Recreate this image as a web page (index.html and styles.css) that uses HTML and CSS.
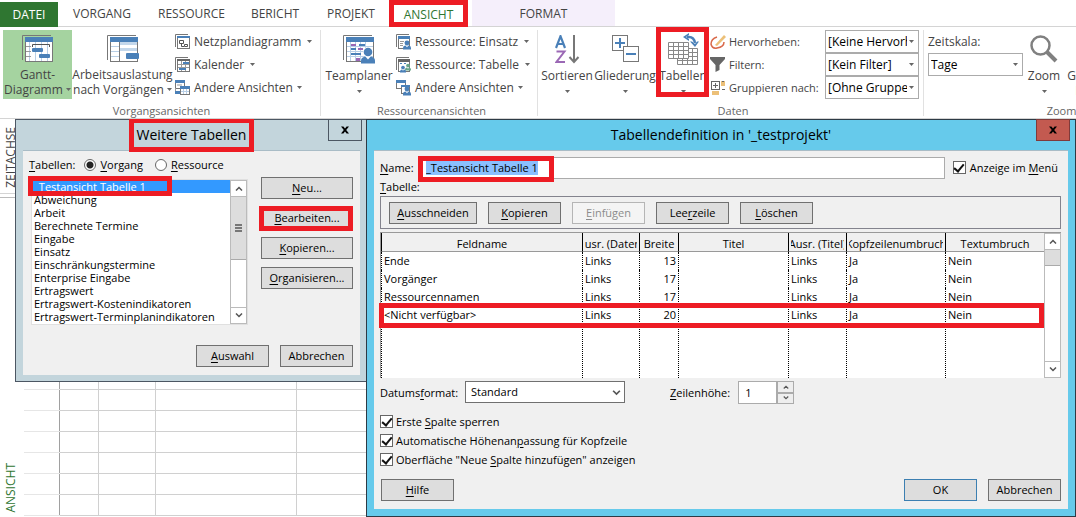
FILE: index.html
```html
<!DOCTYPE html>
<html lang="de">
<head>
<meta charset="utf-8">
<title>Tabellendefinition</title>
<link rel="stylesheet" href="styles.css">
</head>
<body>
<svg class="defs" aria-hidden="true">
  <symbol id="caret" viewBox="0 0 5 3"><path d="M0 0h5L2.500 3z" fill="#666"/></symbol>
  <symbol id="up" viewBox="0 0 8 5"><path d="M1 4.500 4 1.500 7 4.500" fill="none" stroke="#555" stroke-width="1.500"/></symbol>
  <symbol id="down" viewBox="0 0 8 5"><path d="M1 .5 4 3.500 7 .5" fill="none" stroke="#555" stroke-width="1.500"/></symbol>
  <symbol id="person" viewBox="0 0 14 16"><path d="M0 16v-3q0-3 4-4h6q4 1 4 4v3z" fill="currentColor"/><path d="M4 8.500 7 12l3-3.500z" fill="#fff"/><circle cx="7" cy="4.500" r="4.300" fill="currentColor"/></symbol>
  <symbol id="cross" viewBox="0 0 10 9"><path d="M0 0h3l2 2.500L7 0h3L6.500 4.500 10 9H7L5 6.500 3 9H0l3.500-4.500z" fill="#000"/></symbol>
</svg>

<nav class="tabs">
  <button class="tab file">DATEI</button>
  <button class="tab">VORGANG</button>
  <button class="tab">RESSOURCE</button>
  <button class="tab">BERICHT</button>
  <button class="tab">PROJEKT</button>
  <button class="tab active">ANSICHT<span class="mark mark-tab"></span></button>
  <button class="tab context">FORMAT</button>
</nav>

<header class="ribbon">
  <section class="group g-task">
    <div class="tools">
      <button class="big on">
        <svg width="31" height="27" viewBox="0 0 31 27">
          <path d="M.5 25V.5H29" fill="none" stroke="#777"/>
          <rect x="3.500" y="2.500" width="27" height="24" fill="#fff" stroke="#777"/>
          <path d="M3 2h28v5H3z" fill="#4a80b8"/>
          <path d="M7.500 7v19M13.500 7v19M19.500 7v19M25.500 7v19" stroke="#b8cfe6"/><path d="M4 11.500h5M4 16.500h5M4 21.500h5" stroke="#999"/>
          <path d="M10.500 12V9.500h17V12" fill="none" stroke="#555"/>
          <rect x="10" y="13" width="11" height="4" rx="1" fill="#4a80b8"/><rect x="17" y="19" width="11" height="4" rx="1" fill="#4a80b8"/>
        </svg>
        <span>Gantt-<br>Diagramm <svg class="caret"><use href="#caret"/></svg></span>
      </button>
      <button class="big wide">
        <svg width="32" height="27" viewBox="0 0 32 27">
          <path d="M.5 25V.5H29" fill="none" stroke="#777"/>
          <rect x="3.500" y="2.500" width="27" height="24" fill="#fff" stroke="#777"/>
          <path d="M3 2h28v5H3z" fill="#4a80b8"/>
          <path d="M13 7h17v3H13zM13 13h17v3H13z" fill="#c3d7eb"/>
          <path d="M4 11.500h8M4 16.500h8M4 21.500h8" stroke="#b8cfe6"/><path d="M12.500 7v19" stroke="#777"/>
          <rect x="19" y="18" width="13" height="6" rx="1" fill="#4a80b8"/>
        </svg>
        <span>Arbeitsauslastung<br>nach Vorgängen <svg class="caret"><use href="#caret"/></svg></span>
      </button>
      <div class="list">
        <button class="small">
          <svg width="15" height="15" viewBox="0 0 15 15"><path d="M.5 13V.5H13" fill="none" stroke="#777"/><rect x="2.500" y="2.500" width="12" height="12" fill="#fff" stroke="#777"/><path d="M2 2h13v2H2z" fill="#4a80b8"/><path d="M4.500 6.500h4v3h-4zM9.500 10.500h3v2h-3zM6.500 10v2.500H9" fill="none" stroke="#555"/></svg>
          <span>Netzplandiagramm</span><svg class="caret far"><use href="#caret"/></svg>
        </button>
        <button class="small">
          <svg width="15" height="15" viewBox="0 0 15 15"><path d="M.5 13V.5H13" fill="none" stroke="#777"/><rect x="2.500" y="2.500" width="12" height="12" fill="#fff" stroke="#777"/><path d="M2 2h13v2H2z" fill="#666"/><path d="M6.500 4v10M10.500 4v10M3 7.500h11M3 10.500h11" stroke="#999"/><path d="M8 5h6v2H8zM4 11h7v2H4z" fill="#4a80b8"/></svg>
          <span>Kalender</span><svg class="caret far"><use href="#caret"/></svg>
        </button>
        <button class="small">
          <svg width="15" height="15" viewBox="0 0 15 15"><rect x=".5" y=".5" width="9" height="8" fill="#fff" stroke="#777"/><path d="M0 0h10v3H0zM0 11h5v3H0z" fill="#4a80b8"/><path d="M.5 8v3M2 5h5" stroke="#999"/><rect x="5.500" y="6.500" width="9" height="8" fill="#fff" stroke="#777"/><path d="M5 6h10v3H5z" fill="#4a80b8"/><path d="M8.500 9v5M11.500 9v5M6 11.500h8" stroke="#b8cfe6"/></svg>
          <span>Andere Ansichten</span><svg class="caret"><use href="#caret"/></svg>
        </button>
      </div>
    </div>
    <h2>Vorgangsansichten</h2>
  </section>

  <section class="group g-res">
    <div class="tools">
      <button class="big team">
        <svg width="32" height="29" viewBox="0 0 32 29">
          <path d="M.5 25V.5H29" fill="none" stroke="#777"/>
          <rect x="3.500" y="2.500" width="27" height="24" fill="#fff" stroke="#777"/>
          <path d="M3 2h28v5H3z" fill="#4a80b8"/>
          <path d="M7.500 7v19M12.500 7v19M17.500 7v19M22.500 7v19M4 11.500h26M4 16.500h26M4 21.500h26" stroke="#b8cfe6"/>
          <path d="M8 9h5v2H8zM15 13h5v2h-5zM13 23h4v3h-4z" fill="#9b68b5"/><path d="M16 9h6v2h-6zM8 13h5v2H8zM8 18h10v2H8z" fill="#4a80b8"/>
          <circle cx="25" cy="17" r="5" fill="#fff"/>
          <svg x="18" y="12" width="14" height="17" color="#4a80b8"><use href="#person"/></svg>
        </svg>
        <span>Teamplaner</span><svg class="caret low"><use href="#caret"/></svg>
      </button>
      <div class="list">
        <button class="small">
          <svg width="15" height="16" viewBox="0 0 15 16"><path d="M.5 13V.5H13" fill="none" stroke="#777"/><rect x="2.500" y="2.500" width="11" height="12" fill="#fff" stroke="#777"/><path d="M2 2h12v3H2z" fill="#4a80b8"/><path d="M4 7.500h4M4 9.500h3M4 11.500h3" stroke="#999"/><svg x="7" y="6" width="8" height="10" color="#4a80b8"><use href="#person"/></svg></svg>
          <span>Ressource: Einsatz</span><svg class="caret far"><use href="#caret"/></svg>
        </button>
        <button class="small">
          <svg width="15" height="16" viewBox="0 0 15 16"><path d="M.5 13V.5H13" fill="none" stroke="#777"/><rect x="2.500" y="2.500" width="11" height="12" fill="#fff" stroke="#777"/><path d="M2 2h12v3H2z" fill="#666"/><path d="M4 6.500h2M8 6.500h2" stroke="#4a80b8"/><svg x="9" y="6" width="6" height="8" color="#68a58a"><use href="#person"/></svg><svg x="4" y="8" width="6" height="8" color="#4a80b8"><use href="#person"/></svg></svg>
          <span>Ressource: Tabelle</span><svg class="caret far"><use href="#caret"/></svg>
        </button>
        <button class="small">
          <svg width="15" height="16" viewBox="0 0 15 16"><rect x=".5" y=".5" width="9" height="8" fill="#fff" stroke="#777"/><path d="M0 0h10v3H0z" fill="#4a80b8"/><rect x="5.500" y="5.500" width="8" height="8" fill="#fff" stroke="#777"/><path d="M5 5h9v2H5z" fill="#4a80b8"/><svg x="7" y="6" width="8" height="10" color="#4a80b8"><use href="#person"/></svg></svg>
          <span>Andere Ansichten</span><svg class="caret"><use href="#caret"/></svg>
        </button>
      </div>
    </div>
    <h2>Ressourcenansichten</h2>
  </section>

  <section class="group g-data">
    <div class="tools">
      <button class="big sort">
        <svg width="25" height="29" viewBox="0 0 25 29"><path d="M1 13 5.500 1.200 10 13M2.500 9h6" fill="none" stroke="#4a80b8" stroke-width="2.200"/><path d="M1.500 16.500h8L1.500 27h8.500" fill="none" stroke="#9b68b5" stroke-width="2"/><path d="M19 0v27M14.500 22l4.500 5 4.500-5" fill="none" stroke="#777" stroke-width="2"/></svg>
        <span>Sortieren</span><svg class="caret low"><use href="#caret"/></svg>
      </button>
      <button class="big outline">
        <svg width="27" height="28" viewBox="0 0 27 28"><rect x=".5" y=".5" width="15" height="15" fill="#fff" stroke="#777"/><path d="M8 3v10M3 8h10" stroke="#4a80b8" stroke-width="2"/><rect x="11.500" y="11.500" width="15" height="15" fill="#fff" stroke="#777"/><path d="M14 19h10" stroke="#4a80b8" stroke-width="2"/></svg>
        <span>Gliederung</span><svg class="caret low"><use href="#caret"/></svg>
      </button>
      <button class="big tables">
        <svg width="31" height="32" viewBox="0 0 31 32"><path d="M9.500 15.500h20v16h-20zM14.500 15v16M19.500 15v16M24.500 15v16M9 19.500h20M9 23.500h20M9 27.500h20" fill="#fff" stroke="#888"/><path d="M.5 9.500h20v16H.5zM5.500 9v16M10.500 9v16M15.500 9v16M0 13.500h20M0 17.500h20M0 21.500h20" fill="#fff" stroke="#888"/><path d="M19 4h2q5 0 6 6" fill="none" stroke="#4a80b8" stroke-width="2.500"/><path d="M21 0v2l-3 2 3 2v2l-6-4zM22 8.500h2l3 2.500 2-2.500h2L27 14z" fill="#4a80b8"/></svg>
        <span>Tabellen</span><svg class="caret low"><use href="#caret"/></svg>
        <span class="mark mark-fill"></span>
      </button>
      <div class="fields">
        <svg width="16" height="16" viewBox="0 0 16 16"><path d="M7 3Q1 5 1 10q1 5 6 4 7-1 7-6" fill="none" stroke="#d9694a" stroke-width="1.500"/><path d="m5 11 9-10 2 2-9 9z" fill="#ecc078"/></svg>
        <label for="hl">Hervorheben:</label>
        <span class="combo"><select id="hl"><option>[Keine Hervorhebung]</option></select><svg class="caret"><use href="#caret"/></svg></span>
        <svg width="15" height="15" viewBox="0 0 15 15"><path d="M0 0h15v2L9.500 8v5L5.500 15V8L0 2z" fill="#666"/></svg>
        <label for="fi">Filtern:</label>
        <span class="combo"><select id="fi"><option>[Kein Filter]</option></select><svg class="caret"><use href="#caret"/></svg></span>
        <svg width="15" height="15" viewBox="0 0 15 15"><rect x="1.500" y="1.500" width="8" height="8" fill="#fff" stroke="#666"/><path d="M11 1h4v5h-4zM2 11h7v4H2z" fill="#ecc078"/><path d="M5.500 3v5M3 5.500h5M12 1.500h2M12 9.500h3" stroke="#666"/></svg>
        <label for="gr">Gruppieren nach:</label>
        <span class="combo"><select id="gr"><option>[Ohne Gruppe]</option></select><svg class="caret"><use href="#caret"/></svg></span>
      </div>
    </div>
    <h2>Daten</h2>
  </section>

  <section class="group g-zoom">
    <div class="tools">
      <div class="scale">
        <label for="ts">Zeitskala:</label>
        <span class="combo"><select id="ts"><option>Tage</option></select><svg class="caret"><use href="#caret"/></svg></span>
      </div>
      <button class="big zoom">
        <svg width="28" height="28" viewBox="0 0 28 28"><circle cx="10.500" cy="10.500" r="9" fill="#fff" stroke="#808080" stroke-width="2.500"/><path d="m17 17 9 9" stroke="#808080" stroke-width="4"/></svg>
        <span>Zoom</span><svg class="caret low"><use href="#caret"/></svg>
      </button>
      <button class="big whole"><span>Gesamtes<br>Projekt</span></button>
    </div>
    <h2>Zoom</h2>
  </section>
</header>

<main class="workspace">
  <aside class="rail">
    <div class="rail-top"><span>ZEITACHSE</span></div>
    <div class="rail-main"><span>ANSICHT</span></div>
  </aside>
  <table class="sheet" aria-hidden="true">
    <colgroup><col class="c0"><col class="c1"><col class="c2"><col class="c3"><col></colgroup>
    <tr><td><td><td><td><td></tr><tr><td><td><td><td><td></tr><tr><td><td><td><td><td></tr>
    <tr><td><td><td><td><td></tr><tr><td><td><td><td><td></tr><tr><td><td><td><td><td></tr>
    <tr><td><td><td><td><td></tr>
  </table>

  <section class="window more" role="dialog" aria-labelledby="t1">
    <div class="titlebar">
      <h1 id="t1">Weitere Tabellen<span class="mark mark-title"></span></h1>
      <button class="close" aria-label="Schließen"><svg width="8" height="8"><use href="#cross"/></svg></button>
    </div>
    <form class="body">
      <div class="radios">
        <span><u>T</u>abellen:</span>
        <label class="first"><input type="radio" name="k" checked><span><u>V</u>organg</span></label>
        <label><input type="radio" name="k"><span><u>R</u>essource</span></label>
      </div>
      <div class="pick">
        <div class="listbox">
          <ul role="listbox">
            <li role="option" aria-selected="true">_Testansicht Tabelle 1<span class="mark mark-item"></span></li>
            <li role="option">Abweichung</li>
            <li role="option">Arbeit</li>
            <li role="option">Berechnete Termine</li>
            <li role="option">Eingabe</li>
            <li role="option">Einsatz</li>
            <li role="option">Einschränkungstermine</li>
            <li role="option">Enterprise Eingabe</li>
            <li role="option">Ertragswert</li>
            <li role="option">Ertragswert-Kostenindikatoren</li>
            <li role="option">Ertragswert-Terminplanindikatoren</li>
          </ul>
          <div class="scroll">
            <button type="button" aria-label="Nach oben"><svg width="8" height="5"><use href="#up"/></svg></button>
            <div class="thumb tall"><svg width="7" height="8"><path d="M0 1h7M0 4h7M0 7h7" stroke="#555" stroke-width="1.500"/></svg></div>
            <button type="button" class="last" aria-label="Nach unten"><svg width="8" height="5"><use href="#down"/></svg></button>
          </div>
        </div>
        <div class="side">
          <button type="button" class="btn"><span><u>N</u>eu...</span></button>
          <button type="button" class="btn"><span><u>B</u>earbeiten...</span><span class="mark mark-edit"></span></button>
          <button type="button" class="btn"><span><u>K</u>opieren...</span></button>
          <button type="button" class="btn"><span><u>O</u>rganisieren...</span></button>
        </div>
      </div>
      <div class="foot">
        <button type="button" class="btn"><span><u>A</u>uswahl</span></button>
        <button type="button" class="btn">Abbrechen</button>
      </div>
    </form>
  </section>

  <section class="window define" role="dialog" aria-labelledby="t2">
    <div class="titlebar">
      <h1 id="t2">Tabellendefinition in '_testprojekt'</h1>
      <button class="close" aria-label="Schließen"><svg width="8" height="8"><use href="#cross"/></svg></button>
    </div>
    <form class="body">
      <div class="name">
        <label for="nm"><u>N</u>ame:</label>
        <span class="field"><input id="nm" type="text" value="_Testansicht Tabelle 1"><span class="mark mark-name"></span></span>
        <label class="check"><input type="checkbox" checked><span>Anzeige im <u>M</u>enü</span></label>
      </div>
      <p class="caption"><u>T</u>abelle:</p>
      <div class="toolbar">
        <button type="button" class="btn cut"><span><u>A</u>usschneiden</span></button>
        <button type="button" class="btn"><span><u>K</u>opieren</span></button>
        <button type="button" class="btn" disabled><span><u>E</u>infügen</span></button>
        <button type="button" class="btn"><span>Lee<u>r</u>zeile</span></button>
        <button type="button" class="btn"><span><u>L</u>öschen</span></button>
      </div>
      <div class="gridbox">
        <table class="fieldgrid">
          <colgroup><col class="f1"><col class="f2"><col class="f3"><col class="f4"><col class="f5"><col class="f6"><col class="f7"></colgroup>
          <thead><tr><th><div>Feldname</div></th><th><div>Ausr. (Daten)</div></th><th><div>Breite</div></th><th><div>Titel</div></th><th><div>Ausr. (Titel)</div></th><th><div>Kopfzeilenumbruch</div></th><th><div>Textumbruch</div></th></tr></thead>
          <tbody>
            <tr><td>Ende</td><td>Links</td><td class="n">13</td><td></td><td>Links</td><td>Ja</td><td>Nein</td></tr>
            <tr><td>Vorgänger</td><td>Links</td><td class="n">17</td><td></td><td>Links</td><td>Ja</td><td>Nein</td></tr>
            <tr><td>Ressourcennamen</td><td>Links</td><td class="n">17</td><td></td><td>Links</td><td>Ja</td><td>Nein</td></tr>
            <tr class="marked"><td>&lt;Nicht verfügbar&gt;<span class="mark mark-row"></span></td><td>Links</td><td class="n">20</td><td></td><td>Links</td><td>Ja</td><td>Nein</td></tr>
            <tr class="rest"><td></td><td></td><td></td><td></td><td></td><td></td><td></td></tr>
          </tbody>
        </table>
        <div class="scroll">
          <button type="button" aria-label="Nach oben"><svg width="8" height="5"><use href="#up"/></svg></button>
          <div class="thumb"></div>
          <button type="button" class="last" aria-label="Nach unten"><svg width="8" height="5"><use href="#down"/></svg></button>
        </div>
      </div>
      <div class="format">
        <label for="df">Datums<u>f</u>ormat:</label>
        <span class="combo date"><select id="df"><option>Standard</option></select><svg class="chev"><use href="#down"/></svg></span>
        <label for="zh"><u>Z</u>eilenhöhe:</label>
        <span class="spin"><input id="zh" type="text" value="1"><span class="steps"><button type="button" aria-label="Mehr"><svg width="6" height="4"><use href="#up"/></svg></button><button type="button" aria-label="Weniger"><svg width="6" height="4"><use href="#down"/></svg></button></span></span>
      </div>
      <div class="checks">
        <label class="check"><input type="checkbox" checked><span>Erste <u>S</u>palte sperren</span></label>
        <label class="check"><input type="checkbox" checked><span>Automatische Höhenan<u>p</u>assung für Kopfzeile</span></label>
        <label class="check"><input type="checkbox" checked><span>Oberfläche "Neue <u>S</u>palte hinzufügen" anzeigen</span></label>
      </div>
      <div class="foot">
        <button type="button" class="btn help"><span><u>H</u>ilfe</span></button>
        <button type="button" class="btn ok">OK</button>
        <button type="button" class="btn">Abbrechen</button>
      </div>
    </form>
  </section>
</main>
<script src="app.js"></script>
</body>
</html>
```
FILE: app.js
```js
const nameField = document.getElementById('nm');
nameField.focus();
nameField.select();
```
FILE: styles.css
```css
* { box-sizing: border-box; }
html, body { height: 100%; }
body {
  margin: 0;
  display: flex;
  flex-direction: column;
  overflow: hidden;
  background: #fff;
  color: #444;
  font: 12px/16px "Open Sans", "Noto Sans", sans-serif;
}
button, input, select { font: inherit; color: inherit; margin: 0; padding: 0; border-radius: 0; outline: none; }
button { border: 0; background: none; white-space: nowrap; }
h1, h2, p, ul { margin: 0; padding: 0; font-weight: normal; }
ul { list-style: none; }
svg { display: block; flex: none; }
u { text-underline-offset: 2px; }
.defs { position: absolute; width: 0; height: 0; }
.caret { width: 5px; height: 3px; }

.mark { position: absolute; border: 5px solid #ed1c24; pointer-events: none; z-index: 2; }
.mark-tab { inset: -2px 0 0 0; }
.mark-fill { inset: -3px -2px 2px -3px; }
.mark-title { inset: -2px -8px; }
.mark-item { top: -4px; left: -5px; width: 144px; height: 20px; }
.mark-edit { inset: -2px -1px -3px -3px; }
.mark-name { top: -1px; left: -2px; width: 136px; height: 26px; }
.mark-row { top: -3px; left: -2px; right: 0; height: 25px; }

/* Tabs */
.tabs {
  display: grid;
  grid-template-columns: 58px 88px 91px 76px 76px 79px 147px;
  height: 27px;
  padding-top: 2px;
  border-bottom: 1px solid #d4d4d4;
  flex: none;
}
.tab { position: relative; height: 24px; line-height: 24px; }
.tab.file { background: #2f7631; color: #fff; height: 25px; }
.tab.active { color: #2f7631; background: #fff; height: 25px; }
.tab.context { background: #f5effb; margin-left: 4px; margin-top: -2px; height: 26px; line-height: 28px; }

/* Ribbon */
.ribbon { display: flex; height: 92px; flex: none; overflow: hidden; border-bottom: 1px solid #d4d4d4; }
.group { position: relative; flex: none; padding-top: 3px; }
.group + .group { border-left: 1px solid #e1e1e1; border-image: linear-gradient(#fff 4px, #e1e1e1 4px, #e1e1e1 88px, #fff 88px) 1; }
.group h2 { text-align: center; font-size: 11px; line-height: 16px; padding-top: 4px; color: #666; }
.g-task { width: 320px; padding-left: 3px; }
.g-res { width: 217px; padding-left: 5px; }
.g-data { width: 386px; padding-left: 5px; }
.g-zoom { width: 274px; padding-left: 4px; }
.tools { display: flex; height: 69px; }
.big { position: relative; width: 69px; flex: none; display: flex; flex-direction: column; align-items: center; padding-top: 5px; }
.big > svg:first-child { margin-bottom: -28px; }
.big > span:not(.mark) { margin-top: 33px; line-height: 15px; }
.big span .caret { display: inline-block; vertical-align: 3px; }
.caret.low { margin-top: 7px; }
.on { background: #a5d3a0; }
.wide { width: 101px; }
.team { width: 66px; }
.team > svg:first-child { margin-bottom: -29px; }
.sort { width: 48px; }
.sort > svg:first-child { margin-bottom: -29px; }
.outline { width: 64px; margin: 0 2px; }
.tables { width: 48px; }
.tables > svg:first-child { margin: -2px 0 -30px; }
.zoom { width: 42px; }
.whole { width: 60px; }
.list { display: flex; flex-direction: column; padding-left: 2px; }
.g-res .list { padding-left: 4px; }
.small { display: flex; align-items: center; height: 23px; gap: 4px; }
.caret.far { margin-left: 2px; }
.fields {
  display: grid;
  grid-template-columns: 15px 92px 94px;
  grid-auto-rows: 23px;
  column-gap: 4px;
  align-items: center;
  margin-left: 3px;
  white-space: nowrap;
}
.fields label { font-size: 11px; }
.combo { position: relative; display: block; align-self: stretch; }
.combo select { appearance: none; width: 100%; height: 100%; border: 1px solid #ababab; background: #fff; color: #000; padding: 0 11px 0 2px; }
.combo .caret { position: absolute; right: 5px; top: 10px; }
.scale { display: grid; grid-template-rows: 23px 23px; width: 95px; align-items: center; }
.g-zoom h2 { padding-right: 2px; }

/* Sheet */
.workspace { position: relative; flex: 1; display: flex; overflow: hidden; }
.rail { width: 24px; flex: none; display: flex; flex-direction: column; }
.rail span { writing-mode: vertical-rl; transform: rotate(180deg); line-height: 22px; }
.rail-top { height: 81px; padding-top: 8px; border-bottom: 1px solid #d4d4d4; }
.rail-main { flex: 1; margin-top: 3px; padding-top: 265px; border-top: 1px solid #bbb; color: #2f7631; white-space: nowrap; }
.sheet { flex: 1; width: 100%; table-layout: fixed; border-collapse: collapse; margin-top: 249px; align-self: flex-start; }
.sheet td { height: 21px; padding: 0; border-bottom: 1px solid #d0d0d0; border-left: 1px solid #d0d0d0; }
.sheet td:first-child { border-left: 0; border-bottom-color: #e6e6e6; }
.sheet td:nth-child(2) { border-left-color: #a0a0a0; }
.c0 { width: 35px; } .c1 { width: 39px; } .c2 { width: 57px; } .c3 { width: 141px; }

/* Windows */
.window { position: absolute; top: 0; border: 1px solid #4c5763; color: #000; font-size: 11px; line-height: 14px; }
.more { left: 15px; width: 352px; background: #c3d5dc; padding: 0 6px 6px 7px; }
.define { left: 366px; right: 0; background: #66caeb; border-color: #2d3a45; padding: 0 7px 7px; }
.titlebar { position: relative; display: flex; justify-content: center; height: 30px; }
.titlebar h1 { position: relative; font-size: 14px; line-height: 30px; }
.close { position: absolute; right: -2px; top: -1px; width: 34px; height: 22px; border: 1px solid #4c5763; display: grid; place-items: center; }
.define .close { background: #c35a50; border-color: #803a3a; }
.body { background: #f0f0f0; border-top: 1px solid #a9bcc6; }
.more .body { padding: 5px 7px 8px 6px; }
.define .body { padding: 5px 7px 8px 6px; }
.btn { position: relative; width: 73px; height: 22px; flex: none; border: 1px solid #707070; background: #ddd; }
.btn:disabled { color: #8c8c8c; border-color: #b5b5b5; background: #f4f4f4; }
.radios { display: flex; height: 18px; align-items: center; }
.radios label { display: flex; align-items: center; gap: 4px; margin-left: 12px; }
.radios .first { margin-left: 9px; }
input[type=radio] { appearance: none; width: 12px; height: 12px; border: 1px solid #666; border-radius: 50%; background: #fff; }
input[type=radio]:checked { background: radial-gradient(#222 3px, #fff 4px); }
.pick { display: flex; justify-content: space-between; padding: 3px 0 0 2px; }
.listbox { display: flex; width: 217px; height: 146px; margin-top: 2px; border: 1px solid #e0e0e0; background: #fff; }
.listbox ul { flex: 1; min-width: 0; padding: 0 0 0 1px; }
.listbox li { position: relative; line-height: 13px; height: 13px; padding-left: 1px; white-space: nowrap; }
.listbox li[aria-selected] { background: #3399ff; color: #fff; }
.scroll { width: 17px; flex: none; display: flex; flex-direction: column; border: 1px solid #bbb; background: #fff; }
.scroll button { height: 16px; display: grid; place-items: center; border-bottom: 1px solid #bbb; }
.scroll .last { margin-top: auto; border-bottom: 0; border-top: 1px solid #bbb; }
.thumb { height: 16px; background: #ddd; border-bottom: 1px solid #aaa; display: grid; place-items: center; }
.thumb.tall { height: 63px; }
.side { display: flex; flex-direction: column; gap: 8px; }
.side .btn { width: 92px; }
.foot { display: flex; justify-content: flex-end; gap: 11px; }
.more .foot { margin-top: 20px; }

.name { display: flex; align-items: center; height: 23px; }
.name > label:first-child { width: 40px; }
.field { position: relative; flex: 1; height: 22px; margin-right: 8px; }
.field input { width: 100%; height: 22px; border: 1px solid #ababab; background: #fff; padding: 0 5px; }
.field input::selection { background: #8ac0ff; color: #000; }
.check { display: flex; align-items: center; gap: 4px; white-space: nowrap; }
input[type=checkbox] {
  appearance: none;
  width: 13px;
  height: 13px;
  flex: none;
  border: 1px solid #666;
  background: #fff;
  display: grid;
  place-items: center;
}
input[type=checkbox]:checked::after { content: ""; width: 4px; height: 8px; margin-top: -2px; border: solid #111; border-width: 0 2px 2px 0; transform: rotate(40deg); }
.name .check { margin-right: 3px; }
.caption { padding: 1px 0; }
.toolbar { display: flex; gap: 11px; border: 1px solid #83838d; padding: 5px 8px 4px; margin: 1px 0 3px; }
.toolbar .cut { width: 88px; }
.gridbox { display: flex; height: 146px; border-top: 1px solid #999; border-left: 1px solid #999; background: #fff; }
.fieldgrid { position: relative; flex: 1; width: 100%; height: 145px; table-layout: fixed; border-collapse: separate; border-spacing: 0; }
.fieldgrid th { height: 19px; padding: 0; font-weight: normal; background: #f0f0f0; border-left: 1px solid #000; border-bottom: 1px solid #999; }
.fieldgrid th div { display: flex; justify-content: center; overflow: hidden; white-space: nowrap; margin: 4px 2px 0; }
.fieldgrid td { height: 18px; padding: 0 2px; border-left: 1px dotted #000; line-height: 16px; white-space: nowrap; }
.fieldgrid .n { text-align: right; }
.fieldgrid .rest td { height: auto; }
.marked { position: relative; }
.f1 { width: 201px; } .f2 { width: 57px; } .f3 { width: 39px; } .f5 { width: 58px; } .f6 { width: 99px; } .f7 { width: 99px; }
.format { display: flex; align-items: center; margin-top: 3px; }
.format > label:first-child { width: 85px; }
.date { width: 160px; height: 22px; margin-right: 45px; }
.date select { border-color: #707070; padding-left: 5px; }
.chev { position: absolute; right: 4px; top: 9px; width: 9px; height: 6px; }
.spin { display: flex; height: 23px; margin-left: 8px; }
.spin input { width: 39px; border: 1px solid #ababab; background: #fff; padding: 0 6px; }
.steps { display: flex; flex-direction: column; width: 17px; }
.steps button { flex: 1; display: grid; place-items: center; border: 1px solid #ababab; background: #eee; }
.checks { display: flex; flex-direction: column; margin: 8px 0 10px; }
.checks .check { height: 19px; gap: 3px; }
.define .foot { padding-left: 1px; }
.help { margin-right: auto; }
.ok { border-color: #3c7fb1; }
```
